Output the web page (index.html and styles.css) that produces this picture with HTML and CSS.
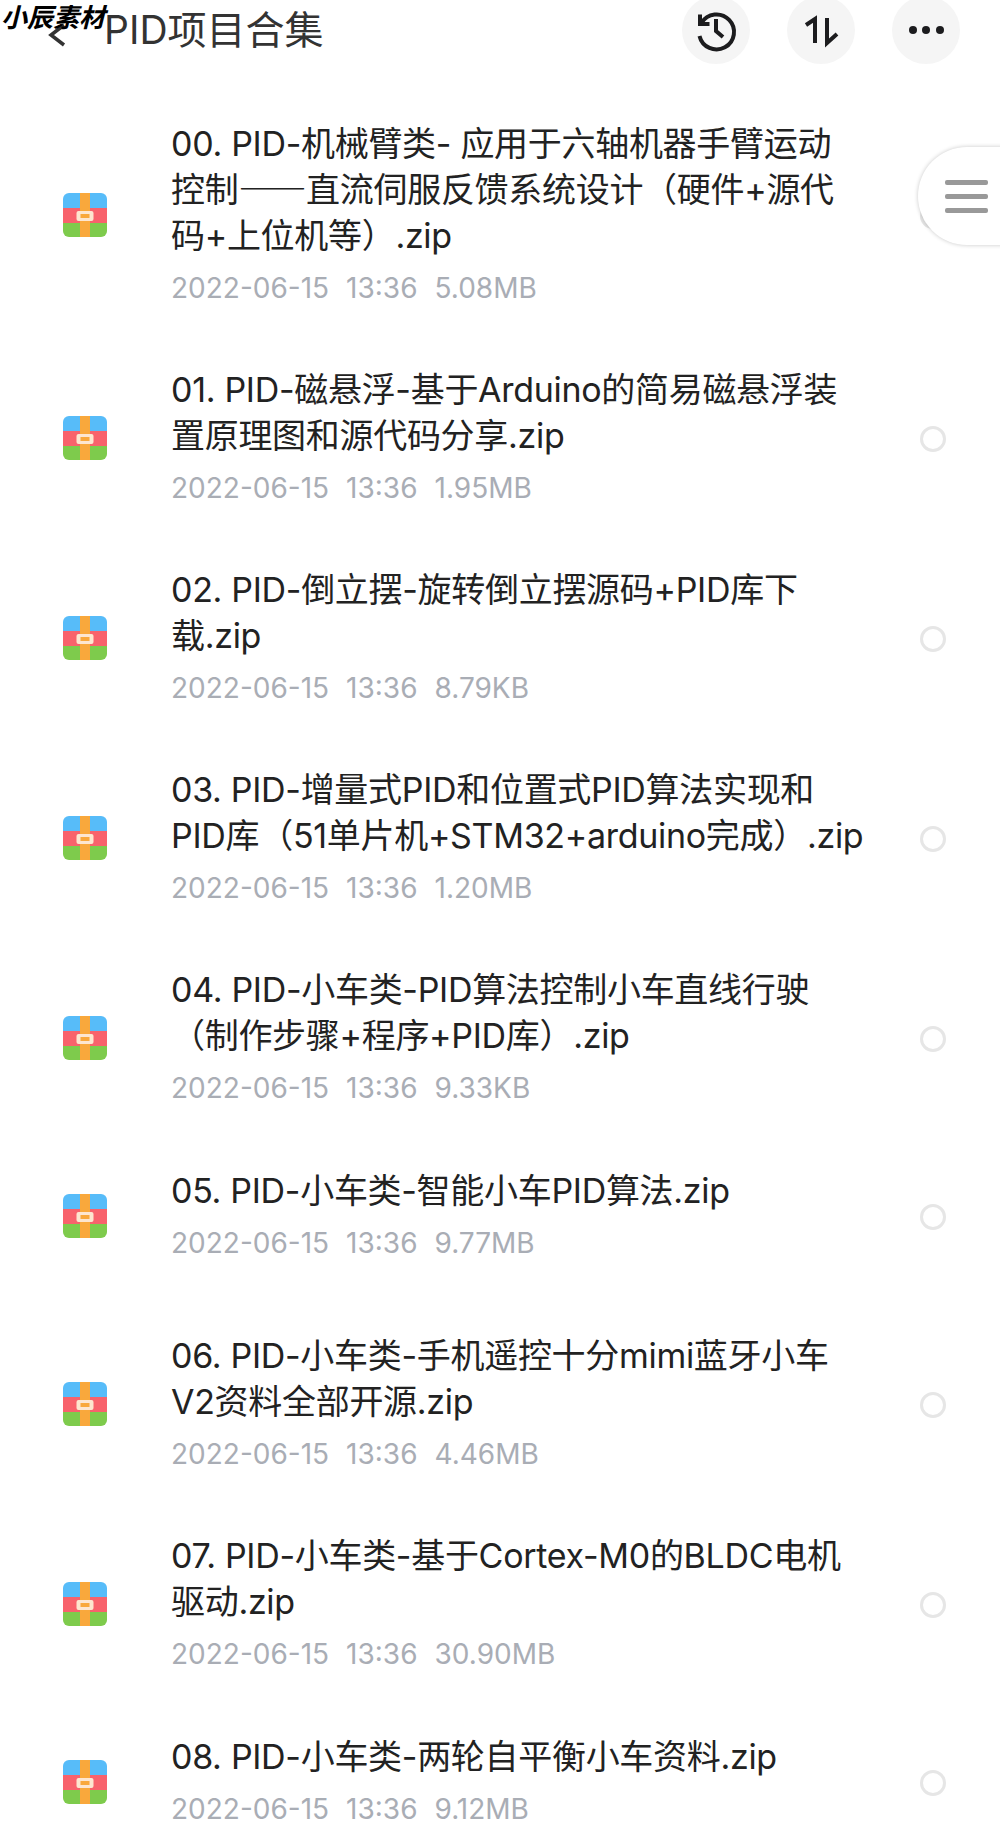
FILE: index.html
```html
<!DOCTYPE html>
<html lang="zh-CN">
<head>
  <meta charset="UTF-8">
  <meta name="viewport" content="width=device-width, initial-scale=1">
  <title>PID项目合集</title>
  <link rel="stylesheet" href="styles.css">
</head>
<body>
  <svg class="defs" width="0" height="0">
    <symbol id="zip" viewBox="0 0 44 44">
      <clipPath id="zipClip"><rect width="44" height="44" rx="6"/></clipPath>
      <g clip-path="url(#zipClip)">
        <rect width="44" height="15" fill="#57bcf9"/>
        <rect y="15" width="44" height="15" fill="#f8626c"/>
        <rect y="30" width="44" height="14" fill="#7ecb4c"/>
        <rect x="17" width="10" height="44" fill="#f9a83c"/>
        <rect x="13.5" y="18" width="17" height="10" rx="2" fill="#fde6d0"/>
        <rect x="17.5" y="21" width="9" height="4" fill="#f9a83c"/>
      </g>
    </symbol>
  </svg>

  <div class="watermark">小辰素材</div>

  <header class="topbar">
    <svg class="back" width="20" height="24" viewBox="0 0 20 24"><path d="M17 2 L4 12 L17 22" fill="none" stroke="#333" stroke-width="3.5"/></svg>
    <h1 class="page-title">PID项目合集</h1>
    <div class="actions">
      <button class="round-btn">
        <svg width="68" height="68" viewBox="0 0 68 68" fill="none" stroke="#1c1c1e" stroke-width="4">
          <path d="M19.5 27 A17.5 17.5 0 1 1 17.5 40"/>
          <path d="M18 18.5 V28 H27.5"/>
          <path d="M34 23 V35 L41 41"/>
        </svg>
      </button>
      <button class="round-btn">
        <svg width="68" height="68" viewBox="0 0 68 68" fill="none" stroke="#1c1c1e" stroke-width="4">
          <path d="M28 47 V23 L19 29"/>
          <path d="M40 22 V47 L50 38"/>
        </svg>
      </button>
      <button class="round-btn">
        <svg width="68" height="68" viewBox="0 0 68 68" fill="#1c1c1e">
          <circle cx="21" cy="34" r="4"/><circle cx="34" cy="34" r="4"/><circle cx="48" cy="34" r="4"/>
        </svg>
      </button>
    </div>
  </header>

  <ul class="file-list">
    <li class="file">
      <svg class="file-icon"><use href="#zip"/></svg>
      <div class="file-info">
        <div class="file-name">00. PID-机械臂类- 应用于六轴机器手臂运动<br>控制<span class="dash">——</span>直流伺服反馈系统设计（硬件+源代<br>码+上位机等）.zip</div>
        <div class="file-meta"><span>2022-06-15</span><span>13:36</span><span>5.08MB</span></div>
      </div>
      <span class="radio"></span>
    </li>
    <li class="file">
      <svg class="file-icon"><use href="#zip"/></svg>
      <div class="file-info">
        <div class="file-name">01. PID-磁悬浮-基于Arduino的简易磁悬浮装<br>置原理图和源代码分享.zip</div>
        <div class="file-meta"><span>2022-06-15</span><span>13:36</span><span>1.95MB</span></div>
      </div>
      <span class="radio"></span>
    </li>
    <li class="file">
      <svg class="file-icon"><use href="#zip"/></svg>
      <div class="file-info">
        <div class="file-name">02. PID-倒立摆-旋转倒立摆源码+PID库下<br>载.zip</div>
        <div class="file-meta"><span>2022-06-15</span><span>13:36</span><span>8.79KB</span></div>
      </div>
      <span class="radio"></span>
    </li>
    <li class="file">
      <svg class="file-icon"><use href="#zip"/></svg>
      <div class="file-info">
        <div class="file-name">03. PID-增量式PID和位置式PID算法实现和<br>PID库（51单片机+STM32+arduino完成）.zip</div>
        <div class="file-meta"><span>2022-06-15</span><span>13:36</span><span>1.20MB</span></div>
      </div>
      <span class="radio"></span>
    </li>
    <li class="file">
      <svg class="file-icon"><use href="#zip"/></svg>
      <div class="file-info">
        <div class="file-name">04. PID-小车类-PID算法控制小车直线行驶<br>（制作步骤+程序+PID库）.zip</div>
        <div class="file-meta"><span>2022-06-15</span><span>13:36</span><span>9.33KB</span></div>
      </div>
      <span class="radio"></span>
    </li>
    <li class="file file-short">
      <svg class="file-icon"><use href="#zip"/></svg>
      <div class="file-info">
        <div class="file-name">05. PID-小车类-智能小车PID算法.zip</div>
        <div class="file-meta"><span>2022-06-15</span><span>13:36</span><span>9.77MB</span></div>
      </div>
      <span class="radio"></span>
    </li>
    <li class="file">
      <svg class="file-icon"><use href="#zip"/></svg>
      <div class="file-info">
        <div class="file-name">06. PID-小车类-手机遥控十分mimi蓝牙小车<br>V2资料全部开源.zip</div>
        <div class="file-meta"><span>2022-06-15</span><span>13:36</span><span>4.46MB</span></div>
      </div>
      <span class="radio"></span>
    </li>
    <li class="file">
      <svg class="file-icon"><use href="#zip"/></svg>
      <div class="file-info">
        <div class="file-name">07. PID-小车类-基于Cortex-M0的BLDC电机<br>驱动.zip</div>
        <div class="file-meta"><span>2022-06-15</span><span>13:36</span><span>30.90MB</span></div>
      </div>
      <span class="radio"></span>
    </li>
    <li class="file file-short">
      <svg class="file-icon"><use href="#zip"/></svg>
      <div class="file-info">
        <div class="file-name">08. PID-小车类-两轮自平衡小车资料.zip</div>
        <div class="file-meta"><span>2022-06-15</span><span>13:36</span><span>9.12MB</span></div>
      </div>
      <span class="radio"></span>
    </li>
  </ul>

  <div class="side-handle">
    <span></span><span></span><span></span>
  </div>
</body>
</html>
```

FILE: styles.css
```css
html, body {
  margin: 0;
  padding: 0;
  height: 100%;
  overflow: hidden;
}

body {
  position: relative;
  background: white;
  color: #222;
  font-family: Inter, "Noto Sans CJK SC", sans-serif;
}

.defs {
  position: absolute;
}

.watermark {
  position: absolute;
  top: 0;
  left: 1px;
  z-index: 5;
  font-family: "Noto Sans CJK SC", sans-serif;
  font-size: 26px;
  line-height: 32px;
  font-style: italic;
  font-weight: 700;
  color: #000;
}

.topbar {
  display: flex;
  align-items: center;
  height: 60px;
  margin-bottom: 33px;
  padding: 0 40px 0 47px;
}

.back {
  margin-top: 10px;
}

.page-title {
  margin: 0 0 0 37px;
  font-size: 39px;
  font-weight: 400;
  line-height: 60px;
  color: #333;
}

.actions {
  display: flex;
  gap: 37px;
  margin-left: auto;
}

.round-btn {
  width: 68px;
  height: 68px;
  padding: 0;
  border: none;
  border-radius: 50%;
  background: #f5f5f5;
}

.round-btn svg {
  display: block;
}

.file-list {
  list-style: none;
  margin: 0;
  padding: 0;
}

.file {
  display: flex;
  align-items: center;
  padding: 28px 0;
  box-sizing: border-box;
}

.file-short {
  min-height: 156px;
  margin-bottom: 10px;
}

.file:last-child {
  margin-bottom: 0;
}

.file-icon {
  flex: none;
  width: 44px;
  height: 44px;
  margin: 0 0 3px 63px;
}

.file-info {
  width: 698px;
  margin-left: 64px;
}

.file-name {
  font-size: 34px;
  line-height: 46px;
  letter-spacing: -0.3px;
  white-space: nowrap;
  color: #222;
}

.dash {
  font-family: "Noto Sans CJK SC", sans-serif;
  line-height: 1;
}

.file-meta {
  display: flex;
  gap: 17px;
  margin-top: 7px;
  font-size: 28px;
  line-height: 45px;
  color: #a9adb5;
}

.radio {
  flex: none;
  width: 20px;
  height: 20px;
  margin-left: 51px;
  border: 3px solid #e6e6e6;
  border-radius: 50%;
}

.side-handle {
  position: absolute;
  top: 147px;
  right: -20px;
  display: flex;
  flex-direction: column;
  justify-content: center;
  gap: 9px;
  width: 102px;
  height: 98px;
  padding-left: 27px;
  box-sizing: border-box;
  border-radius: 49px 0 0 49px;
  background: white;
  box-shadow: 0 0 4px rgba(0, 0, 0, 0.22);
}

.side-handle span {
  display: block;
  width: 43px;
  height: 5px;
  border-radius: 2px;
  background: #999;
}
```
